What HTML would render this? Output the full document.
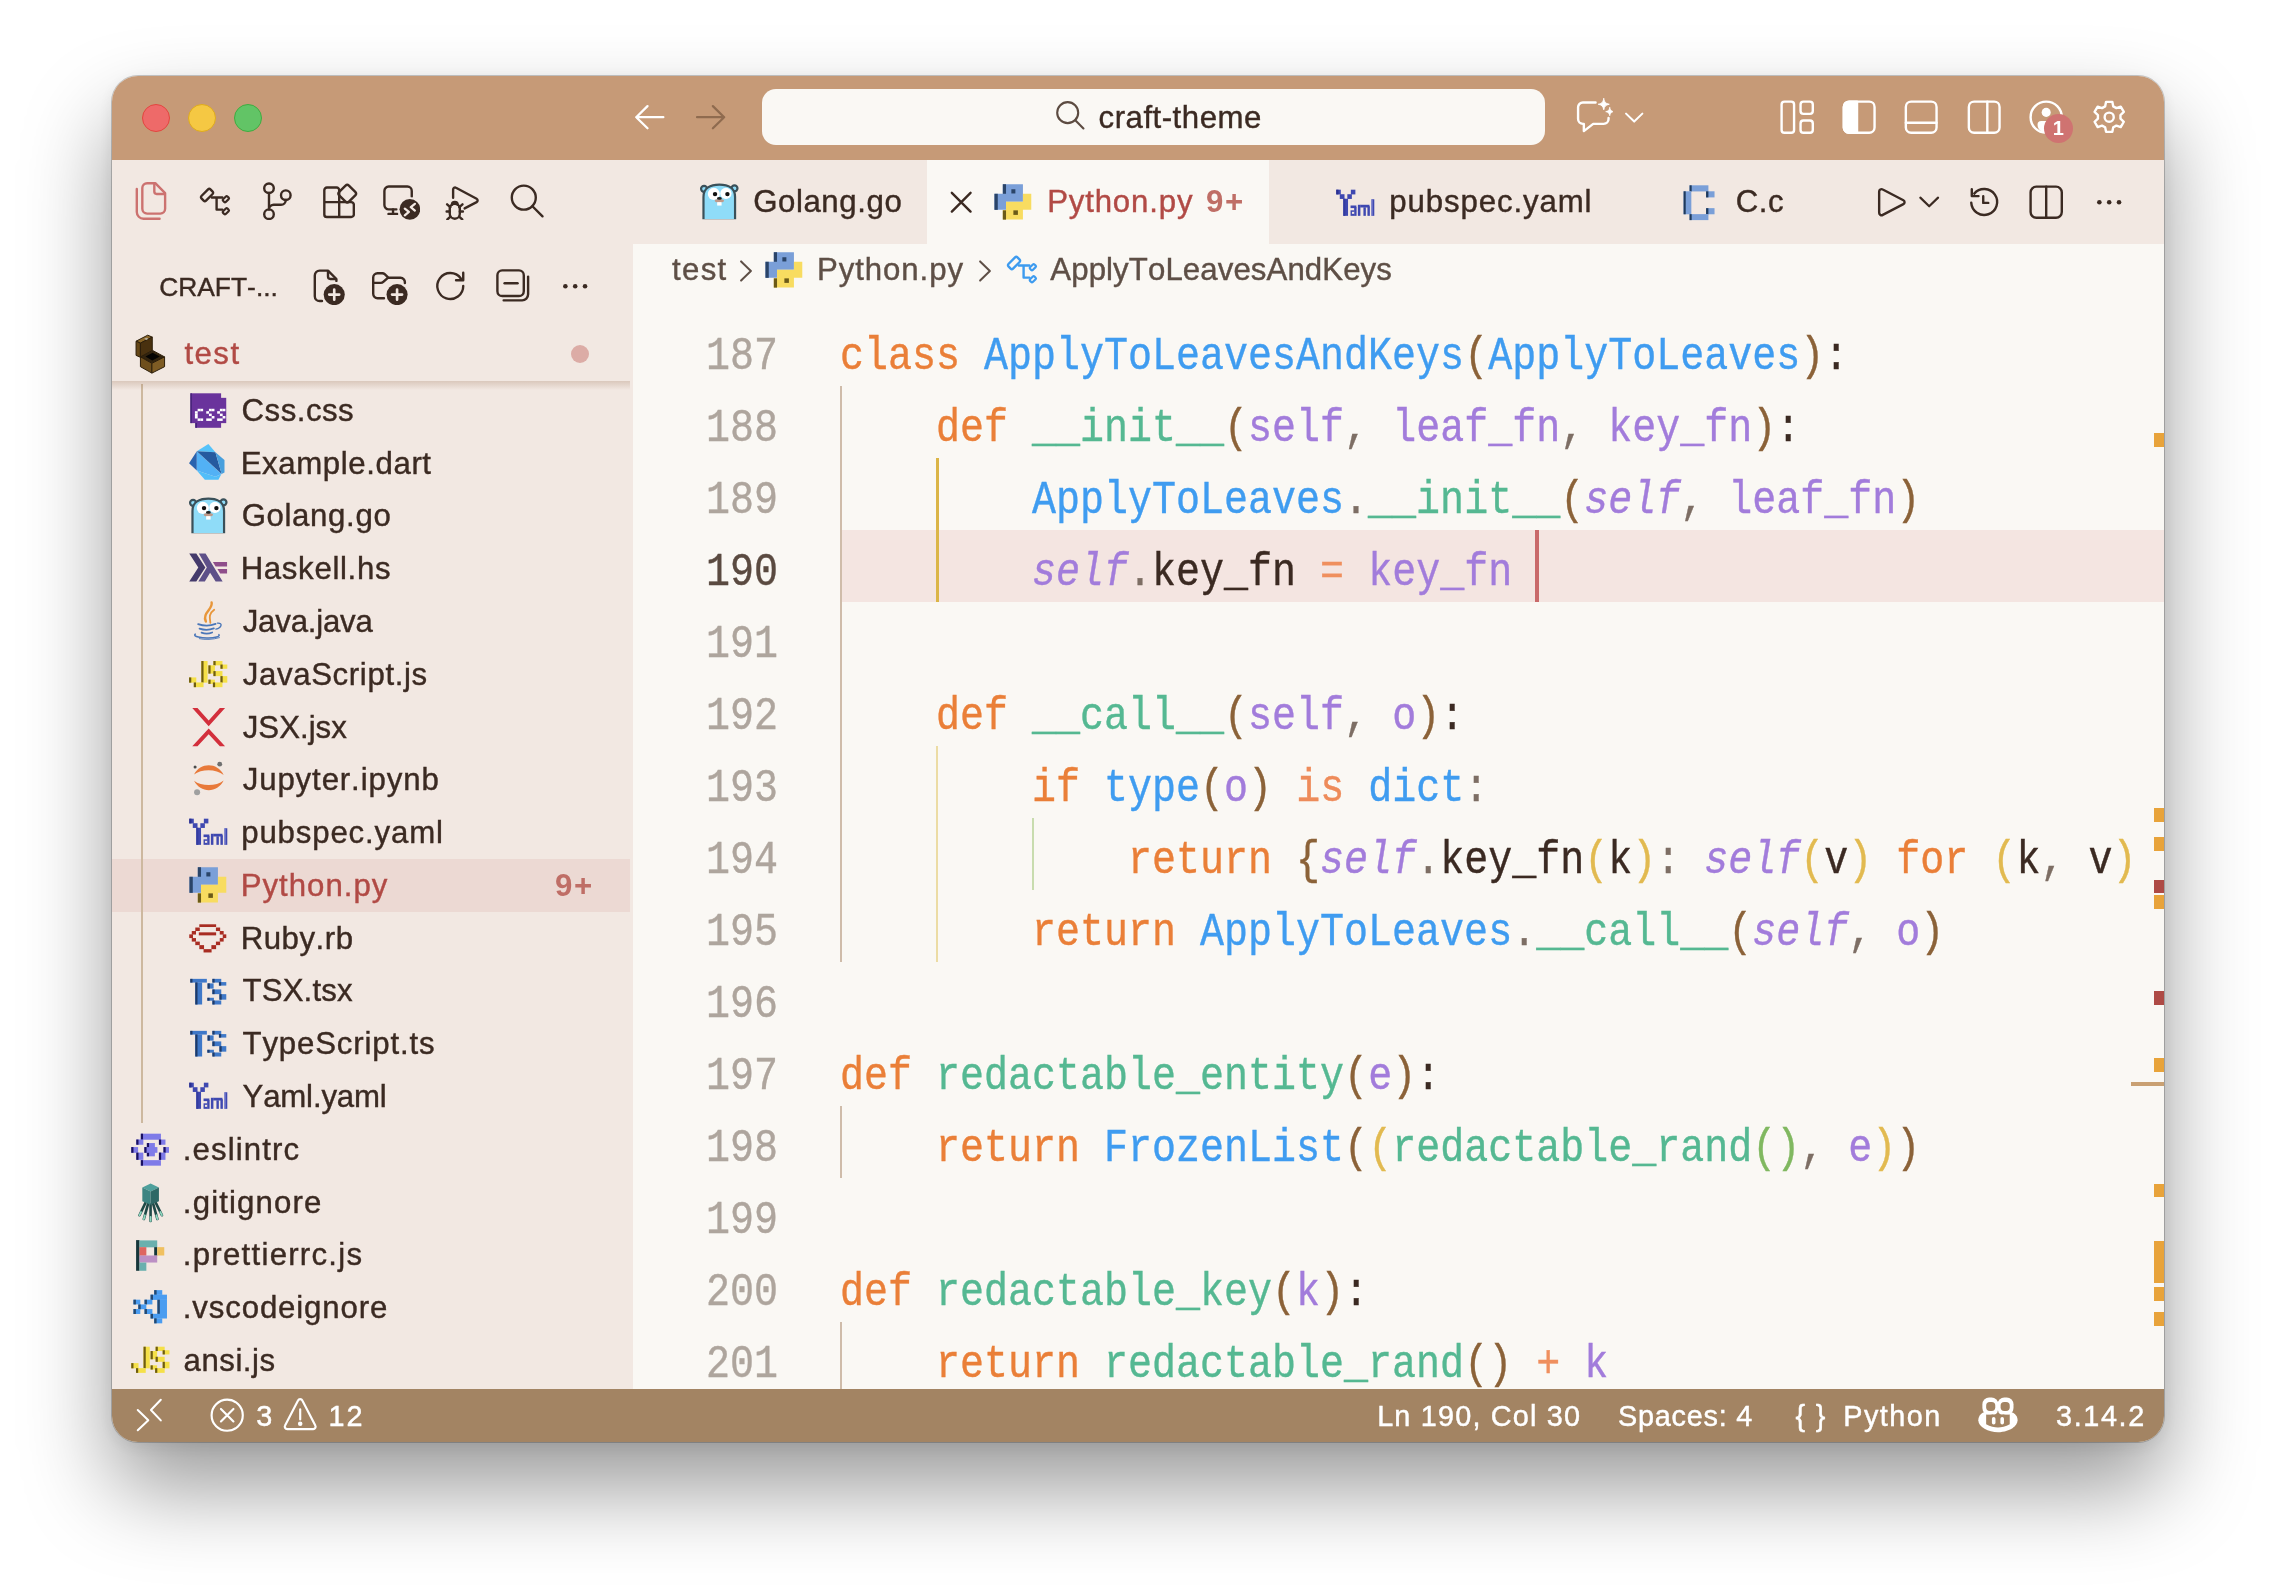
<!DOCTYPE html>
<html lang="en"><head><meta charset="utf-8"><title>craft-theme</title>
<style>
html,body{margin:0;padding:0}
body{width:2276px;height:1590px;background:#fff;overflow:hidden;position:relative;font-family:"Liberation Sans",sans-serif;-webkit-font-smoothing:antialiased}
#win{will-change:transform;position:absolute;left:112px;top:76px;width:2052px;height:1366px;border-radius:26px;overflow:hidden;background:#faf8f4;
 box-shadow:0 0 0 1px rgba(0,0,0,.20),0 46px 88px 0 rgba(0,0,0,.40),0 4px 18px rgba(0,0,0,.08)}
.abs{position:absolute;white-space:nowrap}
.abs svg{display:block}
#title{position:absolute;left:0;top:0;width:2052px;height:84px;background:#c69a77}
#side{position:absolute;left:0;top:84px;width:521px;height:1229px;background:#f2e8e2}
#ed{position:absolute;left:521px;top:84px;width:1531px;height:1229px;background:#faf8f4}
#tabs{position:absolute;left:521px;top:84px;width:1531px;height:84px;background:#f2e8e2}
#acttab{position:absolute;left:815px;top:84px;width:342px;height:84px;background:#faf8f4}
#status{position:absolute;left:0;top:1313px;width:2052px;height:53px;background:#a38463}
.tl{position:absolute;width:26px;height:26px;border-radius:50%;border:1px solid}
#cmd{position:absolute;left:650px;top:13px;width:783px;height:56px;border-radius:14px;background:#faf8f4}
.t{position:absolute;white-space:nowrap;height:40px;line-height:40px;color:#3b2a22;font-size:31.2px;font-kerning:none;-webkit-text-stroke:.4px currentColor}
.cmdt{color:#3b2a22}
.shead{font-size:26.4px}
.red{color:#b14a45}
.red2{color:#bf6e66;font-weight:bold;-webkit-text-stroke:0}
.bc{color:#5e4f46}
.st{color:#fff;font-size:28.8px;-webkit-text-stroke:.45px #fff}
.nbadge{position:absolute;width:29px;height:29px;border-radius:50%;background:#cf7371;color:#fff;font-weight:bold;font-size:20px;line-height:29px;text-align:center}
.selrow{position:absolute;left:0;width:518px;height:53px;background:#ecd9d3}
.tguide{position:absolute;width:2px;background:#cdb89f}
.dot{position:absolute;width:18px;height:18px;border-radius:50%;background:#dcaca6}
#stickysh{position:absolute;left:0;top:305px;width:518px;height:9px;background:linear-gradient(rgba(150,110,80,.26),rgba(150,110,80,0))}
/* code */
.ln,.cl{position:absolute;height:72px;line-height:73.6px;transform:scaleY(1.16);transform-origin:0 0;font-family:"Liberation Mono",monospace;font-size:40px;white-space:pre;-webkit-text-stroke:.35px currentColor}
.ln{left:560px;width:106px;text-align:right;color:#aea59d}
.ln.cur{color:#5a4a40}
.cl{left:728px;color:#3b2a22;width:1312px;height:74px;overflow:hidden}
.k{color:#ea7f38}.c{color:#3f9cf0}.f{color:#55b892}.p{color:#a27cdb}.s{color:#a27cdb;font-style:italic}
.d{color:#3b2a22}.g{color:#7d6e64}.b1{color:#8b6238}.b2{color:#e2ba50}.b3{color:#80b860}.o{color:#ef8f5e}.i{color:#ee8b5a}
.curline{position:absolute;left:728px;top:454px;width:1324px;height:72px;background:#f4e5e1}
.ig{position:absolute;width:2px}
.g1{background:#cfbcaa}.g2{background:#ecdcA4}.g2a{background:#dbb547;width:3px}.g3{background:#c8dcae}
.cursor{position:absolute;left:1423px;top:454px;width:4px;height:72px;background:#c96a6a}
#ruler{position:absolute;left:2040px;top:168px;width:12px;height:1145px}
.mk{position:absolute;left:1.5px;width:11px}
.mo{background:#e8a33a}.mr{background:#ae4a45}
.rcur{position:absolute;left:2019px;top:1006px;width:33px;height:4px;background:#c9a072}
</style></head>
<body>
<div id="win">
<div id="title"></div><div id="side"></div><div id="ed"></div>
<div class="curline"></div>
<div class="ig g1" style="left:728px;top:310px;height:576px"></div>
<div class="ig g1" style="left:728px;top:1030px;height:72px"></div>
<div class="ig g1" style="left:728px;top:1246px;height:78px"></div>
<div class="ig g2a" style="left:824px;top:382px;height:144px"></div>
<div class="ig g2" style="left:824px;top:670px;height:216px"></div>
<div class="ig g3" style="left:920px;top:742px;height:72px"></div>
<div class="ln" style="top:238px">187</div>
<div class="cl" style="top:238px"><span class="k">class</span> <span class="c">ApplyToLeavesAndKeys</span><span class="b1">(</span><span class="c">ApplyToLeaves</span><span class="b1">)</span><span class="d">:</span></div>
<div class="ln" style="top:310px">188</div>
<div class="cl" style="top:310px">    <span class="k">def</span> <span class="f">__init__</span><span class="b1">(</span><span class="p">self</span><span class="g">,</span> <span class="p">leaf_fn</span><span class="g">,</span> <span class="p">key_fn</span><span class="b1">)</span><span class="d">:</span></div>
<div class="ln" style="top:382px">189</div>
<div class="cl" style="top:382px">        <span class="c">ApplyToLeaves</span><span class="g">.</span><span class="f">__init__</span><span class="b1">(</span><span class="s">self</span><span class="g">,</span> <span class="p">leaf_fn</span><span class="b1">)</span></div>
<div class="ln cur" style="top:454px">190</div>
<div class="cl" style="top:454px">        <span class="s">self</span><span class="g">.</span><span class="d">key_fn</span> <span class="o">=</span> <span class="p">key_fn</span> </div>
<div class="ln" style="top:526px">191</div>
<div class="cl" style="top:526px"></div>
<div class="ln" style="top:598px">192</div>
<div class="cl" style="top:598px">    <span class="k">def</span> <span class="f">__call__</span><span class="b1">(</span><span class="p">self</span><span class="g">,</span> <span class="p">o</span><span class="b1">)</span><span class="d">:</span></div>
<div class="ln" style="top:670px">193</div>
<div class="cl" style="top:670px">        <span class="k">if</span> <span class="c">type</span><span class="b1">(</span><span class="p">o</span><span class="b1">)</span> <span class="i">is</span> <span class="c">dict</span><span class="g">:</span></div>
<div class="ln" style="top:742px">194</div>
<div class="cl" style="top:742px">            <span class="k">return</span> <span class="b1">{</span><span class="s">self</span><span class="g">.</span><span class="d">key_fn</span><span class="b2">(</span><span class="d">k</span><span class="b2">)</span><span class="g">:</span> <span class="s">self</span><span class="b2">(</span><span class="d">v</span><span class="b2">)</span> <span class="k">for</span> <span class="b2">(</span><span class="d">k</span><span class="g">,</span> <span class="d">v</span><span class="b2">)</span></div>
<div class="ln" style="top:814px">195</div>
<div class="cl" style="top:814px">        <span class="k">return</span> <span class="c">ApplyToLeaves</span><span class="g">.</span><span class="f">__call__</span><span class="b1">(</span><span class="s">self</span><span class="g">,</span> <span class="p">o</span><span class="b1">)</span></div>
<div class="ln" style="top:886px">196</div>
<div class="cl" style="top:886px"></div>
<div class="ln" style="top:958px">197</div>
<div class="cl" style="top:958px"><span class="k">def</span> <span class="f">redactable_entity</span><span class="b1">(</span><span class="p">e</span><span class="b1">)</span><span class="d">:</span></div>
<div class="ln" style="top:1030px">198</div>
<div class="cl" style="top:1030px">    <span class="k">return</span> <span class="c">FrozenList</span><span class="b1">(</span><span class="b2">(</span><span class="f">redactable_rand</span><span class="b3">(</span><span class="b3">)</span><span class="g">,</span> <span class="p">e</span><span class="b2">)</span><span class="b1">)</span></div>
<div class="ln" style="top:1102px">199</div>
<div class="cl" style="top:1102px"></div>
<div class="ln" style="top:1174px">200</div>
<div class="cl" style="top:1174px"><span class="k">def</span> <span class="f">redactable_key</span><span class="b1">(</span><span class="p">k</span><span class="b1">)</span><span class="d">:</span></div>
<div class="ln" style="top:1246px">201</div>
<div class="cl" style="top:1246px">    <span class="k">return</span> <span class="f">redactable_rand</span><span class="b1">(</span><span class="b1">)</span> <span class="o">+</span> <span class="p">k</span></div>
<div class="cursor"></div>
<div id="ruler"><div class="mk mo" style="top:189px;height:14px"></div><div class="mk mo" style="top:564px;height:14px"></div><div class="mk mo" style="top:593px;height:14px"></div><div class="mk mr" style="top:636px;height:13px"></div><div class="mk mo" style="top:651px;height:14px"></div><div class="mk mr" style="top:747px;height:14px"></div><div class="mk mo" style="top:814px;height:14px"></div><div class="mk mo" style="top:940px;height:13px"></div><div class="mk mo" style="top:997px;height:42px"></div><div class="mk mo" style="top:1043px;height:14px"></div><div class="mk mo" style="top:1068px;height:14px"></div></div>
<div class="rcur"></div>
<div id="tabs"></div><div id="acttab"></div>
<div class="" style="position:absolute;left:521.0px;top:168.0px;width:1531px;height:53px;background:#faf8f4"></div>
<div class="abs " style="left:587.0px;top:107.2px"><svg width="38.4" height="38.4" viewBox="0 0 38.4 38.4" style="overflow:visible"><circle cx="5.08" cy="5.87" r="3.02" fill="#8fdcf8" stroke="#3b5059" stroke-width="2.21"/><circle cx="35.47" cy="5.36" r="3.02" fill="#8fdcf8" stroke="#3b5059" stroke-width="2.21"/><path d="M4.48 37.06L4.48 13.92C4.48 4.86 11.32 1.64 20.38 1.64C29.43 1.64 36.07 4.86 36.07 13.92L36.07 37.06Z" fill="#8fdcf8" stroke="#3b5059" stroke-width="2.21" stroke-linecap="round" stroke-linejoin="round" /><rect x="2.26" y="36.26" width="36.23" height="2.82" fill="#f2e8e2"/><circle cx="14.84" cy="10.9" r="6.04" fill="#ffffff" /><circle cx="26.92" cy="10.39" r="5.64" fill="#ffffff" /><circle cx="16.05" cy="11.1" r="2.21" fill="#111111" /><circle cx="28.43" cy="11.1" r="2.21" fill="#111111" /><ellipse cx="20.38" cy="17.74" rx="4.63" ry="1.81" fill="#c09a8a" /><ellipse cx="20.38" cy="15.42" rx="2.42" ry="1.41" fill="#222222" /><rect x="18.16" y="19.15" width="4.43" height="3.42" fill="#ffffff"/></svg></div>
<div class="t " style="left:641.13px;top:106.3px;letter-spacing:0.587px">Golang.go</div>
<div class="abs " style="left:829.8px;top:106.5px"><svg width="38.4" height="38.4" viewBox="0 0 16 16" fill="none" stroke="#3b2a22" stroke-width="1" stroke-linecap="round" stroke-linejoin="round" ><path d="M4.100 4.100l7.800 7.800M11.900 4.100l-7.800 7.800"/></svg></div>
<div class="abs " style="left:880.6px;top:107.1px"><svg width="38.4" height="38.4" viewBox="0 0 38.4 38.4" style="overflow:visible"><polygon points="9.81,1.21 29.94,1.21 29.94,18.82 13.03,18.82 13.03,26.87 1.46,26.87 1.46,10.77 9.81,10.77" fill="#7a9fd8" /><polygon points="29.94,10.77 38.29,10.77 38.29,26.87 29.94,26.87 29.94,36.63 9.81,36.63 9.81,27.07 13.03,27.07 13.03,18.82 29.94,18.82" fill="#f8dc60" /><rect x="9.81" y="1.21" width="3.22" height="9.56" fill="#2a4468"/><rect x="1.46" y="10.77" width="3.32" height="16.1" fill="#2a4468"/><rect x="18.36" y="6.24" width="4.03" height="4.23" fill="#2a4468"/><rect x="9.81" y="27.37" width="3.22" height="9.26" fill="#6b5a18"/><rect x="20.38" y="27.37" width="4.53" height="4.53" fill="#6b5a18"/></svg></div>
<div class="t red" style="left:935.14px;top:106.3px;letter-spacing:0.833px">Python.py</div>
<div class="t red2" style="left:1094.12px;top:106.3px;letter-spacing:1.474px">9+</div>
<div class="abs " style="left:1222.7px;top:107.6px"><svg width="38.4" height="38.4" viewBox="0 0 38.4 38.4" style="overflow:visible"><rect x="1.26" y="5.69" width="4.53" height="4.73" fill="#3f48b0"/><rect x="4.78" y="10.22" width="4.73" height="4.73" fill="#3f48b0"/><rect x="15.85" y="5.69" width="4.53" height="4.73" fill="#3f48b0"/><rect x="12.33" y="10.22" width="4.53" height="4.73" fill="#3f48b0"/><rect x="8.3" y="14.74" width="4.73" height="17.11" fill="#3f48b0"/><rect x="1.26" y="5.69" width="2.21" height="4.73" fill="#2a3090"/><rect x="8.3" y="14.74" width="2.01" height="17.11" fill="#343ca0"/><rect x="15.55" y="21.49" width="5.84" height="2.62" fill="#3f48b0"/><rect x="19.17" y="23.3" width="2.42" height="8.55" fill="#3f48b0"/><rect x="15.55" y="26.32" width="3.82" height="5.53" fill="#3f48b0"/><rect x="16.95" y="27.83" width="2.21" height="2.01" fill="#f2e8e2"/><rect x="22.89" y="20.78" width="2.52" height="11.07" fill="#3f48b0"/><rect x="25.21" y="20.78" width="9.26" height="2.72" fill="#3f48b0"/><rect x="28.43" y="23.3" width="2.42" height="8.55" fill="#3f48b0"/><rect x="32.45" y="22.29" width="2.42" height="9.56" fill="#3f48b0"/><rect x="36.48" y="15.25" width="2.82" height="16.6" fill="#3f48b0"/><rect x="36.48" y="15.25" width="1.21" height="16.6" fill="#7a80d0"/></svg></div>
<div class="t " style="left:1277.29px;top:106.3px;letter-spacing:0.891px">pubspec.yaml</div>
<div class="abs " style="left:1567.6px;top:106.8px"><svg width="38.4" height="38.4" viewBox="0 0 38.4 38.4" style="overflow:visible"><rect x="9.57" y="2.31" width="18.84" height="6.12" fill="#7a9fd8"/><rect x="9.57" y="2.31" width="2.11" height="6.12" fill="#1f3a5c"/><rect x="3.6" y="8.29" width="7.73" height="22.99" fill="#7a9fd8"/><rect x="3.6" y="8.29" width="2.11" height="22.99" fill="#1f3a5c"/><rect x="26.09" y="8.29" width="8.44" height="6.12" fill="#7a9fd8"/><rect x="26.09" y="8.29" width="2.32" height="6.12" fill="#1f3a5c"/><rect x="26.09" y="25.16" width="8.44" height="6.12" fill="#7a9fd8"/><rect x="26.09" y="25.16" width="2.32" height="6.12" fill="#1f3a5c"/><rect x="9.57" y="31.14" width="18.84" height="5.98" fill="#7a9fd8"/><rect x="9.57" y="31.14" width="2.11" height="5.98" fill="#1f3a5c"/></svg></div>
<div class="t " style="left:1623.72px;top:106.3px;letter-spacing:0.504px">C.c</div>
<div class="abs " style="left:1759.0px;top:106.6px"><svg width="38.4" height="38.4" viewBox="0 0 16 16" fill="none" stroke="#3b2a22" stroke-width="1" stroke-linecap="round" stroke-linejoin="round" ><path d="M3.400 3.600a1 1 0 0 1 1.500-.9l8.600 4.500a.9.9 0 0 1 0 1.600l-8.600 4.500a1 1 0 0 1-1.500-.9z"/></svg></div>
<div class="abs " style="left:1797.8px;top:106.6px"><svg width="38.4" height="38.4" viewBox="0 0 16 16" fill="none" stroke="#3b2a22" stroke-width="0.9" stroke-linecap="round" stroke-linejoin="round" ><path d="M4.300 6.100 8 9.700l3.700-3.600"/></svg></div>
<div class="abs " style="left:1853.0px;top:106.6px"><svg width="38.4" height="38.4" viewBox="0 0 16 16" fill="none" stroke="#3b2a22" stroke-width="1" stroke-linecap="round" stroke-linejoin="round" ><path d="M3.860 4.430A5.400 5.400 0 1 1 2.600 8.200"/><path d="M2.830 2.600v2.860h2.800"/><path d="M7.600 5.500v2.800h2.100"/></svg></div>
<div class="abs " style="left:1915.1px;top:106.6px"><svg width="38.4" height="38.4" viewBox="0 0 16 16" fill="none" stroke="#3b2a22" stroke-width="1" stroke-linecap="round" stroke-linejoin="round" ><rect x="1.500" y="1.500" width="13" height="13" rx="2.400"/><path d="M8 1.500v13"/></svg></div>
<div class="abs " style="left:1977.5px;top:106.6px"><svg width="38.4" height="38.4" viewBox="0 0 16 16" fill="#3b2a22" stroke="none" stroke-width="1" stroke-linecap="round" stroke-linejoin="round" ><circle cx="3.9" cy="8" r=".95"/><circle cx="8" cy="8" r=".95"/><circle cx="12.1" cy="8" r=".95"/></svg></div>
<div class="t bc" style="left:560.03px;top:173.8px;letter-spacing:1.304px">test</div>
<div class="abs " style="left:616.5px;top:177.5px"><svg width="34" height="34" viewBox="0 0 16 16" fill="none" stroke="#5e4f46" stroke-width="0.95" stroke-linecap="round" stroke-linejoin="round" ><path d="M5.700 3.500 10.300 8l-4.600 4.500"/></svg></div>
<div class="abs " style="left:651.8px;top:174.9px"><svg width="38.4" height="38.4" viewBox="0 0 38.4 38.4" style="overflow:visible"><polygon points="9.81,1.21 29.94,1.21 29.94,18.82 13.03,18.82 13.03,26.87 1.46,26.87 1.46,10.77 9.81,10.77" fill="#7a9fd8" /><polygon points="29.94,10.77 38.29,10.77 38.29,26.87 29.94,26.87 29.94,36.63 9.81,36.63 9.81,27.07 13.03,27.07 13.03,18.82 29.94,18.82" fill="#f8dc60" /><rect x="9.81" y="1.21" width="3.22" height="9.56" fill="#2a4468"/><rect x="1.46" y="10.77" width="3.32" height="16.1" fill="#2a4468"/><rect x="18.36" y="6.24" width="4.03" height="4.23" fill="#2a4468"/><rect x="9.81" y="27.37" width="3.22" height="9.26" fill="#6b5a18"/><rect x="20.38" y="27.37" width="4.53" height="4.53" fill="#6b5a18"/></svg></div>
<div class="t bc" style="left:704.94px;top:173.8px;letter-spacing:0.921px">Python.py</div>
<div class="abs " style="left:855.9px;top:177.5px"><svg width="34" height="34" viewBox="0 0 16 16" fill="none" stroke="#5e4f46" stroke-width="0.95" stroke-linecap="round" stroke-linejoin="round" ><path d="M5.700 3.500 10.300 8l-4.600 4.500"/></svg></div>
<div class="abs " style="left:890.0px;top:174.4px"><svg width="38.4" height="38.4" viewBox="0 0 16 16" fill="none" stroke="#3d9bef" stroke-width="1" stroke-linecap="round" stroke-linejoin="round" ><rect x="-2.650" y="-1.350" width="5.300" height="2.700" rx=".7" transform="translate(5.020 5.420) rotate(-45)"/><rect x="-1.300" y="-.8" width="2.600" height="1.600" rx=".45" stroke-width=".9" transform="translate(12.850 7.170) rotate(-45)"/><rect x="-1.300" y="-.8" width="2.600" height="1.600" rx=".45" stroke-width=".9" transform="translate(12.850 12.200) rotate(-45)"/><path d="M7 6.470H11.400M9 6.470V11.500H11.400"/></svg></div>
<div class="t bc" style="left:938.34px;top:173.8px;letter-spacing:0.092px">ApplyToLeavesAndKeys</div>
<div class="selrow" style="position:absolute;left:0.0px;top:783.0px;width:518px;height:53px;"></div>
<div class="tguide" style="position:absolute;left:29.1px;top:308.0px;width:2px;height:739px;"></div>
<div class="abs " style="left:75.8px;top:315.0px"><svg width="38.4" height="38.4" viewBox="0 0 38.4 38.4" style="overflow:visible"><rect x="2.39" y="2.31" width="30.72" height="4.91" fill="#6a339c"/><rect x="2.39" y="6.84" width="35.85" height="25.28" fill="#6a339c"/><rect x="7.29" y="31.97" width="25.81" height="4.83" fill="#6a339c"/><rect x="2.39" y="2.31" width="1.51" height="29.81" fill="#47247a"/><rect x="7.29" y="31.97" width="1.74" height="4.83" fill="#47247a"/><rect x="9.63" y="17.78" width="2.79" height="2.49" fill="#ffffff"/><rect x="12.35" y="17.78" width="2.79" height="2.49" fill="#ffffff"/><rect x="6.92" y="20.2" width="2.79" height="2.49" fill="#ffffff"/><rect x="6.92" y="22.61" width="2.79" height="2.49" fill="#ffffff"/><rect x="6.92" y="25.03" width="2.79" height="2.49" fill="#ffffff"/><rect x="9.63" y="27.44" width="2.79" height="2.49" fill="#ffffff"/><rect x="12.35" y="27.44" width="2.79" height="2.49" fill="#ffffff"/><rect x="20.95" y="17.78" width="2.79" height="2.49" fill="#ffffff"/><rect x="23.67" y="17.78" width="2.79" height="2.49" fill="#ffffff"/><rect x="18.24" y="20.2" width="2.79" height="2.49" fill="#ffffff"/><rect x="20.95" y="22.61" width="2.79" height="2.49" fill="#ffffff"/><rect x="23.67" y="25.03" width="2.79" height="2.49" fill="#ffffff"/><rect x="18.24" y="27.44" width="2.79" height="2.49" fill="#ffffff"/><rect x="20.95" y="27.44" width="2.79" height="2.49" fill="#ffffff"/><rect x="31.9" y="17.78" width="2.79" height="2.49" fill="#ffffff"/><rect x="34.62" y="17.78" width="2.79" height="2.49" fill="#ffffff"/><rect x="29.18" y="20.2" width="2.79" height="2.49" fill="#ffffff"/><rect x="31.9" y="22.61" width="2.79" height="2.49" fill="#ffffff"/><rect x="34.62" y="25.03" width="2.79" height="2.49" fill="#ffffff"/><rect x="29.18" y="27.44" width="2.79" height="2.49" fill="#ffffff"/><rect x="31.9" y="27.44" width="2.79" height="2.49" fill="#ffffff"/></svg></div>
<div class="t " style="left:129.62px;top:314.8px;letter-spacing:0.485px">Css.css</div>
<div class="abs " style="left:75.8px;top:367.8px"><svg width="38.4" height="38.4" viewBox="0 0 38.4 38.4" style="overflow:visible"><polygon points="8.8,7.32 20.38,0.08 27.42,8.33" fill="#56c2f9" /><polygon points="1.06,19.2 8.8,7.32 8.8,26.44" fill="#2a63ae" /><polygon points="8.8,7.32 33.46,29.97 27.42,32.68 8.8,26.44" fill="#52b1f5" /><polygon points="8.8,7.32 27.42,8.33 33.66,29.97" fill="#255a9f" /><polygon points="8.8,26.44 27.42,32.68 33.46,29.97 30.44,35.7 16.85,35.7" fill="#52bef9" /><polygon points="27.42,8.33 36.48,15.88 36.48,28.46 33.66,29.97" fill="#489fdd" /></svg></div>
<div class="t " style="left:128.64px;top:367.6px;letter-spacing:0.606px">Example.dart</div>
<div class="abs " style="left:75.8px;top:420.6px"><svg width="38.4" height="38.4" viewBox="0 0 38.4 38.4" style="overflow:visible"><circle cx="5.08" cy="5.87" r="3.02" fill="#8fdcf8" stroke="#3b5059" stroke-width="2.21"/><circle cx="35.47" cy="5.36" r="3.02" fill="#8fdcf8" stroke="#3b5059" stroke-width="2.21"/><path d="M4.48 37.06L4.48 13.92C4.48 4.86 11.32 1.64 20.38 1.64C29.43 1.64 36.07 4.86 36.07 13.92L36.07 37.06Z" fill="#8fdcf8" stroke="#3b5059" stroke-width="2.21" stroke-linecap="round" stroke-linejoin="round" /><rect x="2.26" y="36.26" width="36.23" height="2.82" fill="#f2e8e2"/><circle cx="14.84" cy="10.9" r="6.04" fill="#ffffff" /><circle cx="26.92" cy="10.39" r="5.64" fill="#ffffff" /><circle cx="16.05" cy="11.1" r="2.21" fill="#111111" /><circle cx="28.43" cy="11.1" r="2.21" fill="#111111" /><ellipse cx="20.38" cy="17.74" rx="4.63" ry="1.81" fill="#c09a8a" /><ellipse cx="20.38" cy="15.42" rx="2.42" ry="1.41" fill="#222222" /><rect x="18.16" y="19.15" width="4.43" height="3.42" fill="#ffffff"/></svg></div>
<div class="t " style="left:129.63px;top:420.4px;letter-spacing:0.650px">Golang.go</div>
<div class="abs " style="left:75.8px;top:473.3px"><svg width="38.4" height="38.4" viewBox="0 0 38.4 38.4" style="overflow:visible"><polygon points="1.26,4.41 8.3,4.41 17.36,18.49 8.3,32.58 1.26,32.58 10.31,18.49" fill="#453a6b" /><polygon points="10.82,4.41 17.56,4.41 34.67,32.58 27.62,32.58 22.09,23.73 16.85,32.58 10.31,32.58 18.87,18.49" fill="#5e5088" /><polygon points="24.9,12.96 39.09,12.96 39.09,17.49 27.62,17.49" fill="#8f4e8b" /><polygon points="29.43,20.0 39.09,20.0 39.09,24.53 32.15,24.53" fill="#8f4e8b" /></svg></div>
<div class="t " style="left:128.64px;top:473.1px;letter-spacing:0.674px">Haskell.hs</div>
<div class="abs " style="left:75.8px;top:526.1px"><svg width="38.4" height="38.4" viewBox="0 0 38.4 38.4" style="overflow:visible"><path d="M23.6 0.44C25.41 6.98 13.84 11.01 17.86 19.56" fill="none" stroke="#e8963a" stroke-width="2.42" stroke-linecap="round" stroke-linejoin="round" /><path d="M26.21 7.79C20.88 11.51 21.38 15.03 22.39 20.87" fill="none" stroke="#e8963a" stroke-width="1.81" stroke-linecap="round" stroke-linejoin="round" /><path d="M10.11 22.08C15.34 23.89 22.39 23.89 27.62 21.88" fill="none" stroke="#4a76b8" stroke-width="1.71" stroke-linecap="round" stroke-linejoin="round" /><path d="M11.52 26.61C15.85 28.12 21.38 28.12 25.91 26.41" fill="none" stroke="#4a76b8" stroke-width="1.71" stroke-linecap="round" stroke-linejoin="round" /><path d="M13.53 30.63C16.85 31.84 20.88 31.84 24.2 30.43" fill="none" stroke="#4a76b8" stroke-width="1.71" stroke-linecap="round" stroke-linejoin="round" /><path d="M29.43 21.07C35.47 20.57 33.46 26.1 27.92 27.11" fill="none" stroke="#4a76b8" stroke-width="1.31" stroke-linecap="round" stroke-linejoin="round" /><path d="M7.29 32.14C4.28 34.66 14.34 36.17 20.38 35.97C26.41 35.76 32.45 34.66 30.94 32.64" fill="none" stroke="#4a76b8" stroke-width="1.51" stroke-linecap="round" stroke-linejoin="round" /><path d="M11.32 36.67C17.36 37.98 24.4 37.68 31.45 35.66" fill="none" stroke="#4a76b8" stroke-width="0.91" stroke-linecap="round" stroke-linejoin="round" /></svg></div>
<div class="t " style="left:130.71px;top:525.9px;letter-spacing:-0.203px">Java.java</div>
<div class="abs " style="left:75.8px;top:578.9px"><svg width="38.4" height="38.4" viewBox="0 0 38.4 38.4" style="overflow:visible"><rect x="13.33" y="6.03" width="6.24" height="21.64" fill="#f5e048"/><rect x="13.33" y="6.03" width="2.21" height="21.64" fill="#6e5c12"/><rect x="1.06" y="22.43" width="7.25" height="5.23" fill="#f5e048"/><rect x="1.06" y="22.43" width="2.21" height="5.23" fill="#6e5c12"/><rect x="5.78" y="27.46" width="9.76" height="4.73" fill="#f5e048"/><rect x="5.78" y="27.46" width="2.21" height="4.73" fill="#6e5c12"/><rect x="25.41" y="6.03" width="9.06" height="4.33" fill="#f5e048"/><rect x="25.41" y="6.03" width="2.21" height="4.33" fill="#6e5c12"/><rect x="32.45" y="9.55" width="6.84" height="4.23" fill="#f5e048"/><rect x="32.45" y="9.55" width="2.21" height="4.23" fill="#6e5c12"/><rect x="20.38" y="10.36" width="6.54" height="8.25" fill="#f5e048"/><rect x="20.38" y="10.36" width="2.21" height="8.25" fill="#6e5c12"/><rect x="25.41" y="16.09" width="9.06" height="5.03" fill="#f5e048"/><rect x="25.41" y="16.09" width="2.21" height="5.03" fill="#6e5c12"/><rect x="32.45" y="21.12" width="6.84" height="6.54" fill="#f5e048"/><rect x="32.45" y="21.12" width="2.21" height="6.54" fill="#6e5c12"/><rect x="20.38" y="24.64" width="6.54" height="4.23" fill="#f5e048"/><rect x="20.38" y="24.64" width="2.21" height="4.23" fill="#6e5c12"/><rect x="24.9" y="27.46" width="9.56" height="4.73" fill="#f5e048"/><rect x="24.9" y="27.46" width="2.21" height="4.73" fill="#6e5c12"/></svg></div>
<div class="t " style="left:130.71px;top:578.7px;letter-spacing:0.638px">JavaScript.js</div>
<div class="abs " style="left:75.8px;top:631.7px"><svg width="38.4" height="38.4" viewBox="0 0 38.4 38.4" style="overflow:visible"><polygon points="4.28,0.04 9.51,0.04 20.68,12.62 31.85,0.04 37.08,0.04 20.68,18.36" fill="#d32f3c" /><polygon points="4.28,38.28 20.68,20.47 37.08,38.28 31.85,38.28 20.68,26.2 9.51,38.28" fill="#d32f3c" /></svg></div>
<div class="t " style="left:130.71px;top:631.5px;letter-spacing:0.017px">JSX.jsx</div>
<div class="abs " style="left:75.8px;top:684.4px"><svg width="38.4" height="38.4" viewBox="0 0 38.4 38.4" style="overflow:visible"><path d="M6.09 14.49C12.33 2.12 29.43 2.12 35.67 14.9C28.43 8.66 13.33 8.66 6.09 14.49Z" fill="#e8793a" stroke="none" stroke-width="0.0" stroke-linecap="round" stroke-linejoin="round" /><path d="M6.09 20.73C12.33 33.31 29.43 33.31 35.67 20.53C28.43 26.57 13.33 26.57 6.09 20.73Z" fill="#e8793a" stroke="none" stroke-width="0.0" stroke-linecap="round" stroke-linejoin="round" /><circle cx="9.11" cy="32.3" r="3.02" fill="#a0a0a0" /><circle cx="31.75" cy="4.13" r="2.42" fill="#707070" /><circle cx="7.09" cy="6.95" r="1.51" fill="#4a4a4a" /></svg></div>
<div class="t " style="left:130.71px;top:684.2px;letter-spacing:0.877px">Jupyter.ipynb</div>
<div class="abs " style="left:75.8px;top:737.2px"><svg width="38.4" height="38.4" viewBox="0 0 38.4 38.4" style="overflow:visible"><rect x="1.26" y="5.69" width="4.53" height="4.73" fill="#3f48b0"/><rect x="4.78" y="10.22" width="4.73" height="4.73" fill="#3f48b0"/><rect x="15.85" y="5.69" width="4.53" height="4.73" fill="#3f48b0"/><rect x="12.33" y="10.22" width="4.53" height="4.73" fill="#3f48b0"/><rect x="8.3" y="14.74" width="4.73" height="17.11" fill="#3f48b0"/><rect x="1.26" y="5.69" width="2.21" height="4.73" fill="#2a3090"/><rect x="8.3" y="14.74" width="2.01" height="17.11" fill="#343ca0"/><rect x="15.55" y="21.49" width="5.84" height="2.62" fill="#3f48b0"/><rect x="19.17" y="23.3" width="2.42" height="8.55" fill="#3f48b0"/><rect x="15.55" y="26.32" width="3.82" height="5.53" fill="#3f48b0"/><rect x="16.95" y="27.83" width="2.21" height="2.01" fill="#f2e8e2"/><rect x="22.89" y="20.78" width="2.52" height="11.07" fill="#3f48b0"/><rect x="25.21" y="20.78" width="9.26" height="2.72" fill="#3f48b0"/><rect x="28.43" y="23.3" width="2.42" height="8.55" fill="#3f48b0"/><rect x="32.45" y="22.29" width="2.42" height="9.56" fill="#3f48b0"/><rect x="36.48" y="15.25" width="2.82" height="16.6" fill="#3f48b0"/><rect x="36.48" y="15.25" width="1.21" height="16.6" fill="#7a80d0"/></svg></div>
<div class="t " style="left:129.19px;top:737.0px;letter-spacing:0.845px">pubspec.yaml</div>
<div class="abs " style="left:75.8px;top:790.0px"><svg width="38.4" height="38.4" viewBox="0 0 38.4 38.4" style="overflow:visible"><polygon points="9.81,1.21 29.94,1.21 29.94,18.82 13.03,18.82 13.03,26.87 1.46,26.87 1.46,10.77 9.81,10.77" fill="#7a9fd8" /><polygon points="29.94,10.77 38.29,10.77 38.29,26.87 29.94,26.87 29.94,36.63 9.81,36.63 9.81,27.07 13.03,27.07 13.03,18.82 29.94,18.82" fill="#f8dc60" /><rect x="9.81" y="1.21" width="3.22" height="9.56" fill="#2a4468"/><rect x="1.46" y="10.77" width="3.32" height="16.1" fill="#2a4468"/><rect x="18.36" y="6.24" width="4.03" height="4.23" fill="#2a4468"/><rect x="9.81" y="27.37" width="3.22" height="9.26" fill="#6b5a18"/><rect x="20.38" y="27.37" width="4.53" height="4.53" fill="#6b5a18"/></svg></div>
<div class="t red" style="left:128.64px;top:789.8px;letter-spacing:1.008px">Python.py</div>
<div class="t red2" style="left:443.02px;top:789.8px;letter-spacing:1.574px">9+</div>
<div class="abs " style="left:75.8px;top:842.8px"><svg width="38.4" height="38.4" viewBox="0 0 38.4 38.4" style="overflow:visible"><rect x="11.32" y="5.3" width="16.81" height="2.72" fill="#a82c22"/><rect x="7.29" y="8.52" width="4.53" height="3.52" fill="#a82c22"/><rect x="3.77" y="12.04" width="4.23" height="3.52" fill="#a82c22"/><rect x="1.26" y="15.36" width="3.72" height="3.72" fill="#a82c22"/><rect x="3.77" y="19.08" width="4.23" height="3.52" fill="#a82c22"/><rect x="7.29" y="22.61" width="4.53" height="3.52" fill="#a82c22"/><rect x="11.32" y="26.13" width="4.73" height="4.03" fill="#a82c22"/><rect x="15.55" y="30.15" width="8.05" height="3.32" fill="#a82c22"/><rect x="27.92" y="8.52" width="4.23" height="3.52" fill="#a82c22"/><rect x="31.75" y="12.04" width="3.92" height="3.52" fill="#a82c22"/><rect x="34.77" y="15.36" width="3.52" height="3.72" fill="#a82c22"/><rect x="31.75" y="19.08" width="3.92" height="3.52" fill="#a82c22"/><rect x="27.92" y="22.61" width="4.23" height="3.52" fill="#a82c22"/><rect x="23.39" y="26.13" width="4.73" height="4.03" fill="#a82c22"/><rect x="10.82" y="13.35" width="17.31" height="3.02" fill="#a82c22"/></svg></div>
<div class="t " style="left:128.64px;top:842.6px;letter-spacing:0.537px">Ruby.rb</div>
<div class="abs " style="left:75.8px;top:895.6px"><svg width="38.4" height="38.4" viewBox="0 0 38.4 38.4" style="overflow:visible"><rect x="2.26" y="6.86" width="16.6" height="3.72" fill="#3f78c8"/><rect x="2.26" y="6.86" width="2.21" height="3.72" fill="#1e3a68"/><rect x="7.29" y="10.38" width="6.84" height="22.14" fill="#3f78c8"/><rect x="7.29" y="10.38" width="2.21" height="22.14" fill="#1e3a68"/><rect x="24.4" y="6.86" width="8.86" height="3.72" fill="#3f78c8"/><rect x="24.4" y="6.86" width="2.21" height="3.72" fill="#1e3a68"/><rect x="30.94" y="10.08" width="7.35" height="3.52" fill="#3f78c8"/><rect x="30.94" y="10.08" width="2.21" height="3.52" fill="#1e3a68"/><rect x="19.57" y="11.39" width="6.04" height="5.23" fill="#3f78c8"/><rect x="19.57" y="11.39" width="2.21" height="5.23" fill="#1e3a68"/><rect x="24.4" y="17.42" width="8.86" height="4.73" fill="#3f78c8"/><rect x="24.4" y="17.42" width="2.21" height="4.73" fill="#1e3a68"/><rect x="31.45" y="22.15" width="6.84" height="5.53" fill="#3f78c8"/><rect x="31.45" y="22.15" width="2.21" height="5.53" fill="#1e3a68"/><rect x="19.37" y="25.78" width="6.54" height="2.92" fill="#3f78c8"/><rect x="19.37" y="25.78" width="2.21" height="2.92" fill="#1e3a68"/><rect x="24.4" y="28.49" width="8.86" height="4.03" fill="#3f78c8"/><rect x="24.4" y="28.49" width="2.21" height="4.03" fill="#1e3a68"/></svg></div>
<div class="t " style="left:130.50px;top:895.4px;letter-spacing:0.153px">TSX.tsx</div>
<div class="abs " style="left:75.8px;top:948.3px"><svg width="38.4" height="38.4" viewBox="0 0 38.4 38.4" style="overflow:visible"><rect x="2.26" y="6.86" width="16.6" height="3.72" fill="#3f78c8"/><rect x="2.26" y="6.86" width="2.21" height="3.72" fill="#1e3a68"/><rect x="7.29" y="10.38" width="6.84" height="22.14" fill="#3f78c8"/><rect x="7.29" y="10.38" width="2.21" height="22.14" fill="#1e3a68"/><rect x="24.4" y="6.86" width="8.86" height="3.72" fill="#3f78c8"/><rect x="24.4" y="6.86" width="2.21" height="3.72" fill="#1e3a68"/><rect x="30.94" y="10.08" width="7.35" height="3.52" fill="#3f78c8"/><rect x="30.94" y="10.08" width="2.21" height="3.52" fill="#1e3a68"/><rect x="19.57" y="11.39" width="6.04" height="5.23" fill="#3f78c8"/><rect x="19.57" y="11.39" width="2.21" height="5.23" fill="#1e3a68"/><rect x="24.4" y="17.42" width="8.86" height="4.73" fill="#3f78c8"/><rect x="24.4" y="17.42" width="2.21" height="4.73" fill="#1e3a68"/><rect x="31.45" y="22.15" width="6.84" height="5.53" fill="#3f78c8"/><rect x="31.45" y="22.15" width="2.21" height="5.53" fill="#1e3a68"/><rect x="19.37" y="25.78" width="6.54" height="2.92" fill="#3f78c8"/><rect x="19.37" y="25.78" width="2.21" height="2.92" fill="#1e3a68"/><rect x="24.4" y="28.49" width="8.86" height="4.03" fill="#3f78c8"/><rect x="24.4" y="28.49" width="2.21" height="4.03" fill="#1e3a68"/></svg></div>
<div class="t " style="left:130.50px;top:948.1px;letter-spacing:0.840px">TypeScript.ts</div>
<div class="abs " style="left:75.8px;top:1001.1px"><svg width="38.4" height="38.4" viewBox="0 0 38.4 38.4" style="overflow:visible"><rect x="1.26" y="5.69" width="4.53" height="4.73" fill="#3f48b0"/><rect x="4.78" y="10.22" width="4.73" height="4.73" fill="#3f48b0"/><rect x="15.85" y="5.69" width="4.53" height="4.73" fill="#3f48b0"/><rect x="12.33" y="10.22" width="4.53" height="4.73" fill="#3f48b0"/><rect x="8.3" y="14.74" width="4.73" height="17.11" fill="#3f48b0"/><rect x="1.26" y="5.69" width="2.21" height="4.73" fill="#2a3090"/><rect x="8.3" y="14.74" width="2.01" height="17.11" fill="#343ca0"/><rect x="15.55" y="21.49" width="5.84" height="2.62" fill="#3f48b0"/><rect x="19.17" y="23.3" width="2.42" height="8.55" fill="#3f48b0"/><rect x="15.55" y="26.32" width="3.82" height="5.53" fill="#3f48b0"/><rect x="16.95" y="27.83" width="2.21" height="2.01" fill="#f2e8e2"/><rect x="22.89" y="20.78" width="2.52" height="11.07" fill="#3f48b0"/><rect x="25.21" y="20.78" width="9.26" height="2.72" fill="#3f48b0"/><rect x="28.43" y="23.3" width="2.42" height="8.55" fill="#3f48b0"/><rect x="32.45" y="22.29" width="2.42" height="9.56" fill="#3f48b0"/><rect x="36.48" y="15.25" width="2.82" height="16.6" fill="#3f48b0"/><rect x="36.48" y="15.25" width="1.21" height="16.6" fill="#7a80d0"/></svg></div>
<div class="t " style="left:130.51px;top:1000.9px;letter-spacing:-0.169px">Yaml.yaml</div>
<div class="abs " style="left:18.8px;top:1053.9px"><svg width="38.4" height="38.4" viewBox="0 0 38.4 38.4" style="overflow:visible"><rect x="9.82" y="3.69" width="20.13" height="6.04" fill="#7f7be8"/><rect x="9.82" y="3.69" width="2.21" height="6.04" fill="#1a1060"/><rect x="9.82" y="30.15" width="20.13" height="5.53" fill="#7f7be8"/><rect x="9.82" y="30.15" width="2.21" height="5.53" fill="#1a1060"/><rect x="5.29" y="9.52" width="7.04" height="5.23" fill="#7f7be8"/><rect x="5.29" y="9.52" width="2.21" height="5.23" fill="#1a1060"/><rect x="0.26" y="17.07" width="6.84" height="5.74" fill="#7f7be8"/><rect x="0.26" y="17.07" width="2.21" height="5.74" fill="#1a1060"/><rect x="5.29" y="22.61" width="7.04" height="7.25" fill="#7f7be8"/><rect x="5.29" y="22.61" width="2.21" height="7.25" fill="#1a1060"/><rect x="27.93" y="9.52" width="6.54" height="5.23" fill="#7f7be8"/><rect x="27.93" y="9.52" width="2.21" height="5.23" fill="#1a1060"/><rect x="32.46" y="17.07" width="5.53" height="5.74" fill="#7f7be8"/><rect x="32.46" y="17.07" width="2.21" height="5.74" fill="#1a1060"/><rect x="27.93" y="22.61" width="6.54" height="7.25" fill="#7f7be8"/><rect x="27.93" y="22.61" width="2.21" height="7.25" fill="#1a1060"/><rect x="15.85" y="13.05" width="8.05" height="13.28" fill="#7f7be8"/><rect x="15.85" y="13.05" width="2.21" height="13.28" fill="#1a1060"/><rect x="13.34" y="17.07" width="13.08" height="5.74" fill="#7f7be8"/><rect x="13.34" y="17.07" width="2.21" height="5.74" fill="#1a1060"/></svg></div>
<div class="t " style="left:70.85px;top:1053.7px;letter-spacing:1.097px">.eslintrc</div>
<div class="abs " style="left:18.8px;top:1106.7px"><svg width="38.4" height="38.4" viewBox="0 0 38.4 38.4" style="overflow:visible"><path d="M14.55 19.64L8.51 32.22" fill="none" stroke="#1f4a48" stroke-width="2.62" stroke-linecap="round" stroke-linejoin="round" /><path d="M10.02 29.07L8.51 32.22" fill="none" stroke="#8fd8c0" stroke-width="1.81" stroke-linecap="round" stroke-linejoin="round" /><path d="M17.06 20.95L12.84 36.04" fill="none" stroke="#1f4a48" stroke-width="2.62" stroke-linecap="round" stroke-linejoin="round" /><path d="M13.89 32.27L12.84 36.04" fill="none" stroke="#8fd8c0" stroke-width="1.81" stroke-linecap="round" stroke-linejoin="round" /><path d="M19.58 21.65L19.58 37.95" fill="none" stroke="#1f4a48" stroke-width="2.62" stroke-linecap="round" stroke-linejoin="round" /><path d="M19.58 33.88L19.58 37.95" fill="none" stroke="#8fd8c0" stroke-width="1.81" stroke-linecap="round" stroke-linejoin="round" /><path d="M22.19 20.95L26.42 36.04" fill="none" stroke="#1f4a48" stroke-width="2.62" stroke-linecap="round" stroke-linejoin="round" /><path d="M25.36 32.27L26.42 36.04" fill="none" stroke="#8fd8c0" stroke-width="1.81" stroke-linecap="round" stroke-linejoin="round" /><path d="M24.71 19.64L30.95 32.22" fill="none" stroke="#1f4a48" stroke-width="2.62" stroke-linecap="round" stroke-linejoin="round" /><path d="M29.39 29.07L30.95 32.22" fill="none" stroke="#8fd8c0" stroke-width="1.81" stroke-linecap="round" stroke-linejoin="round" /><polygon points="11.33,4.54 19.58,0.52 27.93,4.54 19.58,8.57" fill="#4fa09c" /><polygon points="11.33,4.54 19.58,8.57 19.58,21.85 11.33,18.13" fill="#3c8482" /><polygon points="19.58,8.57 27.93,4.54 27.93,18.13 19.58,21.85" fill="#2e6866" /></svg></div>
<div class="t " style="left:70.85px;top:1106.5px;letter-spacing:1.143px">.gitignore</div>
<div class="abs " style="left:18.8px;top:1159.5px"><svg width="38.4" height="38.4" viewBox="0 0 38.4 38.4" style="overflow:visible"><rect x="5.09" y="4.1" width="3.42" height="30.69" fill="#16363a"/><rect x="8.51" y="4.4" width="17.71" height="6.94" fill="#6ab0ae"/><rect x="8.51" y="11.15" width="6.84" height="8.55" fill="#de6660"/><rect x="23.2" y="11.15" width="3.02" height="8.55" fill="#16363a"/><rect x="26.22" y="11.15" width="7.04" height="8.35" fill="#f0c060"/><rect x="8.51" y="19.5" width="17.71" height="7.04" fill="#bc90c4"/><rect x="8.51" y="26.54" width="6.84" height="8.25" fill="#6ab0ae"/></svg></div>
<div class="t " style="left:70.85px;top:1159.3px;letter-spacing:1.255px">.prettierrc.js</div>
<div class="abs " style="left:18.8px;top:1212.2px"><svg width="38.4" height="38.4" viewBox="0 0 38.4 38.4" style="overflow:visible"><rect x="23.2" y="2.14" width="8.05" height="4.73" fill="#4a9cf0"/><rect x="23.2" y="2.14" width="2.42" height="4.73" fill="#244870"/><rect x="19.58" y="6.67" width="16.4" height="5.23" fill="#4a9cf0"/><rect x="19.58" y="6.67" width="2.42" height="5.23" fill="#244870"/><rect x="26.42" y="11.7" width="9.56" height="14.29" fill="#4a9cf0"/><rect x="26.42" y="11.7" width="2.42" height="14.29" fill="#244870"/><rect x="19.58" y="25.79" width="16.4" height="4.73" fill="#4a9cf0"/><rect x="19.58" y="25.79" width="2.42" height="4.73" fill="#244870"/><rect x="23.2" y="30.32" width="8.05" height="5.03" fill="#4a9cf0"/><rect x="23.2" y="30.32" width="2.42" height="5.03" fill="#244870"/><rect x="2.47" y="11.7" width="6.84" height="4.73" fill="#4a9cf0"/><rect x="2.47" y="11.7" width="2.42" height="4.73" fill="#244870"/><rect x="13.54" y="11.7" width="7.85" height="4.73" fill="#4a9cf0"/><rect x="13.54" y="11.7" width="2.42" height="4.73" fill="#244870"/><rect x="7.3" y="16.43" width="8.05" height="4.83" fill="#4a9cf0"/><rect x="7.3" y="16.43" width="2.42" height="4.83" fill="#244870"/><rect x="2.47" y="21.06" width="6.84" height="4.93" fill="#4a9cf0"/><rect x="2.47" y="21.06" width="2.42" height="4.93" fill="#244870"/><rect x="13.54" y="21.06" width="7.85" height="4.93" fill="#4a9cf0"/><rect x="13.54" y="21.06" width="2.42" height="4.93" fill="#244870"/></svg></div>
<div class="t " style="left:70.85px;top:1212.0px;letter-spacing:0.857px">.vscodeignore</div>
<div class="abs " style="left:18.8px;top:1265.0px"><svg width="38.4" height="38.4" viewBox="0 0 38.4 38.4" style="overflow:visible"><rect x="12.53" y="5.71" width="6.24" height="21.64" fill="#f5e048"/><rect x="12.53" y="5.71" width="2.21" height="21.64" fill="#6e5c12"/><rect x="0.26" y="22.11" width="7.25" height="5.23" fill="#f5e048"/><rect x="0.26" y="22.11" width="2.21" height="5.23" fill="#6e5c12"/><rect x="4.99" y="27.15" width="9.76" height="4.73" fill="#f5e048"/><rect x="4.99" y="27.15" width="2.21" height="4.73" fill="#6e5c12"/><rect x="24.61" y="5.71" width="9.06" height="4.33" fill="#f5e048"/><rect x="24.61" y="5.71" width="2.21" height="4.33" fill="#6e5c12"/><rect x="31.65" y="9.23" width="6.84" height="4.23" fill="#f5e048"/><rect x="31.65" y="9.23" width="2.21" height="4.23" fill="#6e5c12"/><rect x="19.58" y="10.04" width="6.54" height="8.25" fill="#f5e048"/><rect x="19.58" y="10.04" width="2.21" height="8.25" fill="#6e5c12"/><rect x="24.61" y="15.78" width="9.06" height="5.03" fill="#f5e048"/><rect x="24.61" y="15.78" width="2.21" height="5.03" fill="#6e5c12"/><rect x="31.65" y="20.81" width="6.84" height="6.54" fill="#f5e048"/><rect x="31.65" y="20.81" width="2.21" height="6.54" fill="#6e5c12"/><rect x="19.58" y="24.33" width="6.54" height="4.23" fill="#f5e048"/><rect x="19.58" y="24.33" width="2.21" height="4.23" fill="#6e5c12"/><rect x="24.11" y="27.15" width="9.56" height="4.73" fill="#f5e048"/><rect x="24.11" y="27.15" width="2.21" height="4.73" fill="#6e5c12"/></svg></div>
<div class="t " style="left:71.57px;top:1264.8px;letter-spacing:0.520px">ansi.js</div>
<div class="" style="position:absolute;left:0.0px;top:252.0px;width:521px;height:53px;background:#f2e8e2"></div>
<div id="stickysh"></div>
<div class="abs " style="left:18.8px;top:258.8px"><svg width="38.4" height="38.4" viewBox="0 0 38.4 38.4" style="overflow:visible"><polygon points="5.05,6.2 16.75,0.16 21.28,2.12 9.43,8.16" fill="#8a6628" stroke="#2c1e0a" stroke-width="1" stroke-linejoin="round"/><polygon points="5.05,6.2 9.43,8.16 9.43,22.28 5.05,20.39" fill="#654616" stroke="#2c1e0a" stroke-width="1" stroke-linejoin="round"/><polygon points="9.43,8.16 21.28,2.12 21.28,15.48 9.43,22.28" fill="#49310f" stroke="#2c1e0a" stroke-width="1" stroke-linejoin="round"/><polygon points="9.43,21.9 21.65,15.48 33.58,21.9 20.9,28.31" fill="#33240e" stroke="#2c1e0a" stroke-width="1" stroke-linejoin="round"/><polygon points="14.48,21.52 21.65,17.75 28.82,21.52 21.28,25.52" fill="#050402" /><polygon points="9.43,21.9 20.9,28.31 20.9,38.12 9.43,31.71" fill="#6f4f1c" stroke="#2c1e0a" stroke-width="1" stroke-linejoin="round"/><polygon points="20.9,28.31 33.58,21.9 33.58,31.71 20.9,38.12" fill="#7e5c24" stroke="#2c1e0a" stroke-width="1" stroke-linejoin="round"/><polygon points="13.2,3.78 15.24,2.73 17.5,3.78 15.46,4.92" fill="#b8b0a0" /></svg></div>
<div class="t red" style="left:72.43px;top:258.3px;letter-spacing:1.471px">test</div>
<div class="dot" style="position:absolute;left:459.0px;top:269.0px;width:18px;height:18px;"></div>
<div class="" style="position:absolute;left:0.0px;top:84.0px;width:521px;height:168px;background:#f2e8e2"></div>
<div class="abs " style="left:20.3px;top:105.5px"><svg width="38.4" height="38.4" viewBox="0 0 16 16" fill="none" stroke="#cc7270" stroke-width="1" stroke-linecap="round" stroke-linejoin="round" ><path d="M6.3 .5H9.7L13.8 4.6v6.6a2 2 0 0 1-2 2H6.3a2 2 0 0 1-2-2V2.500a2 2 0 0 1 2-2z"/><path d="M9.300 .7V4a1 1 0 0 0 1 1h3.300"/><path d="M2 2.900V12.500a2.800 2.800 0 0 0 2.800 2.800H11.500"/></svg></div>
<div class="abs " style="left:82.7px;top:105.5px"><svg width="38.4" height="38.4" viewBox="0 0 16 16" fill="none" stroke="#3b2a22" stroke-width="1" stroke-linecap="round" stroke-linejoin="round" ><rect x="-2.650" y="-1.350" width="5.300" height="2.700" rx=".7" transform="translate(5.020 5.420) rotate(-45)"/><rect x="-1.300" y="-.8" width="2.600" height="1.600" rx=".45" stroke-width=".9" transform="translate(12.850 7.170) rotate(-45)"/><rect x="-1.300" y="-.8" width="2.600" height="1.600" rx=".45" stroke-width=".9" transform="translate(12.850 12.200) rotate(-45)"/><path d="M7 6.470H11.400M9 6.470V11.500H11.400"/></svg></div>
<div class="abs " style="left:145.1px;top:105.5px"><svg width="38.4" height="38.4" viewBox="0 0 16 16" fill="none" stroke="#3b2a22" stroke-width="1" stroke-linecap="round" stroke-linejoin="round" ><circle cx="5" cy="2.6" r="2"/><circle cx="5" cy="13.4" r="2"/><circle cx="12" cy="5.5" r="2"/><path d="M5 4.6v6.8M12 7.5a2 2 0 0 1-2 2H7a2 2 0 0 0-2 2"/></svg></div>
<div class="abs " style="left:207.5px;top:105.5px"><svg width="38.4" height="38.4" viewBox="0 0 16 16" fill="none" stroke="#3b2a22" stroke-width="1" stroke-linecap="round" stroke-linejoin="round" ><path d="M8 8.400V3.400a1.100 1.100 0 0 0-1.100-1.100H2.900a1.100 1.100 0 0 0-1.100 1.100v10.100a1.100 1.100 0 0 0 1.100 1.100h10.100a1.100 1.100 0 0 0 1.100-1.100V9.500a1.100 1.100 0 0 0-1.100-1.100zM1.800 8.400H8V14.600"/><path d="M10.650 1.500a1 1 0 0 1 1.400 0l2.650 2.650a1 1 0 0 1 0 1.400l-2.650 2.650a1 1 0 0 1-1.400 0L8 5.550a1 1 0 0 1 0-1.400z"/></svg></div>
<div class="abs " style="left:269.9px;top:105.5px"><svg width="38.4" height="38.4" viewBox="0 0 16 16" fill="none" stroke="#3b2a22" stroke-width="1" stroke-linecap="round" stroke-linejoin="round" ><path d="M6 11.4H2.8A1.8 1.8 0 0 1 1 9.6V3.7a1.8 1.8 0 0 1 1.8-1.8h7.8a1.8 1.8 0 0 1 1.8 1.8V6"/><path d="M4.6 11.4v1.9M2.7 13.3H6.3"/><circle cx="11.6" cy="11.4" r="4.95" fill="#f2e8e2" stroke="none"/><circle cx="11.6" cy="11.4" r="4.3" fill="#3b2a22" stroke="none"/><path d="M9.500 11.100l1.700 1.400-1.700 1.400M13.700 9.100l-1.700 1.400 1.700 1.400" stroke="#f2e8e2" stroke-width=".95"/></svg></div>
<div class="abs " style="left:332.3px;top:105.5px"><svg width="38.4" height="38.4" viewBox="0 0 16 16" fill="none" stroke="#3b2a22" stroke-width="1" stroke-linecap="round" stroke-linejoin="round" ><path d="M3.8 6.6V3.1a.8.8 0 0 1 1.2-.7l8.6 4.6a.8.8 0 0 1 0 1.4L8.6 11"/><path d="M2.4 11.2a2.1 2.1 0 0 1 4.2 0v2a2.1 2.1 0 0 1-4.2 0z"/><path d="M3.3 9.5a1.2 1.2 0 0 1 2.4 0M2.4 12.3H1.1M6.6 12.3h1.3M2.6 10.5 1.3 9.3M6.4 10.5l1.3-1.2M2.7 14.4l-1.3 1.2M6.3 14.4l1.3 1.2"/></svg></div>
<div class="abs " style="left:394.7px;top:105.5px"><svg width="38.4" height="38.4" viewBox="0 0 16 16" fill="none" stroke="#3b2a22" stroke-width="1" stroke-linecap="round" stroke-linejoin="round" ><circle cx="7" cy="6.5" r="5"/><path d="M10.6 10.1l4.2 4.2"/></svg></div>
<div class="t shead" style="left:47.16px;top:191.0px;letter-spacing:-0.004px">CRAFT-...</div>
<div class="abs " style="left:198.4px;top:190.8px"><svg width="38.4" height="38.4" viewBox="0 0 16 16" fill="none" stroke="#3b2a22" stroke-width="1" stroke-linecap="round" stroke-linejoin="round" ><path d="M5 14.2H4a2 2 0 0 1-2-2V3.5a2 2 0 0 1 2-2h3.5L11 5v.8"/><path d="M7.5 1.7V4a1 1 0 0 0 1 1h2.3"/><circle cx="10.1" cy="11.5" r="4.4" fill="#3b2a22" stroke="none"/><path d="M8.0 11.5h4.2M10.1 9.4v4.2" stroke="#f2e8e2" stroke-width="1.1"/></svg></div>
<div class="abs " style="left:259.9px;top:190.8px"><svg width="38.4" height="38.4" viewBox="0 0 16 16" fill="none" stroke="#3b2a22" stroke-width="1" stroke-linecap="round" stroke-linejoin="round" ><path d="M5 13H2.3A1.8 1.8 0 0 1 .5 11.2V4.4a1.8 1.8 0 0 1 1.8-1.8h2a1.5 1.5 0 0 1 1 .4l1.6 1.5h5a1.8 1.8 0 0 1 1.8 1.8v.4"/><path d="M.5 6.6h3.2a1.5 1.5 0 0 0 1-.4l1.9-1.7"/><circle cx="10.45" cy="11.5" r="4.4" fill="#3b2a22" stroke="none"/><path d="M8.35 11.5h4.2M10.45 9.4v4.2" stroke="#f2e8e2" stroke-width="1.1"/></svg></div>
<div class="abs " style="left:321.4px;top:190.8px"><svg width="38.4" height="38.4" viewBox="0 0 16 16" fill="none" stroke="#3b2a22" stroke-width="1" stroke-linecap="round" stroke-linejoin="round" ><path d="M12.6 7.9A5.4 5.4 0 1 1 11.6 4.8"/><path d="M12.6 2.4v3.1H9.6"/></svg></div>
<div class="abs " style="left:382.9px;top:190.8px"><svg width="38.4" height="38.4" viewBox="0 0 16 16" fill="none" stroke="#3b2a22" stroke-width="1" stroke-linecap="round" stroke-linejoin="round" ><rect x="1" y="1.4" width="11" height="10.7" rx="2"/><path d="M4 6.8h5.4"/><path d="M13.8 4v7.4a2.5 2.5 0 0 1-2.5 2.5H3.6"/></svg></div>
<div class="abs " style="left:444.4px;top:190.8px"><svg width="38.4" height="38.4" viewBox="0 0 16 16" fill="#3b2a22" stroke="none" stroke-width="1" stroke-linecap="round" stroke-linejoin="round" ><circle cx="3.9" cy="8" r=".95"/><circle cx="8" cy="8" r=".95"/><circle cx="12.1" cy="8" r=".95"/></svg></div>
<div class="tl" style="position:absolute;left:30.0px;top:28.0px;width:26px;height:26px;background:#ee6a69;border-color:#e2463f"></div>
<div class="tl" style="position:absolute;left:76.0px;top:28.0px;width:26px;height:26px;background:#f5c843;border-color:#dfab1c"></div>
<div class="tl" style="position:absolute;left:122.0px;top:28.0px;width:26px;height:26px;background:#62c466;border-color:#3fac41"></div>
<div class="abs " style="left:517.6px;top:21.7px"><svg width="38.4" height="38.4" viewBox="0 0 16 16" fill="none" stroke="#ffffff" stroke-width="0.95" stroke-linecap="round" stroke-linejoin="round" ><path d="M2.6 8h11.3M7.3 3.4 2.6 8l4.7 4.6"/></svg></div>
<div class="abs " style="left:580.3px;top:21.7px"><svg width="38.4" height="38.4" viewBox="0 0 16 16" fill="none" stroke="#8f6b4f" stroke-width="0.95" stroke-linecap="round" stroke-linejoin="round" ><path d="M13.4 8H2.1M8.7 3.4 13.4 8l-4.7 4.6"/></svg></div>
<div id="cmd"></div>
<div class="abs " style="left:940.9px;top:23.2px"><svg width="33.6" height="33.6" viewBox="0 0 16 16" fill="none" stroke="#5c4b41" stroke-width="1.0" stroke-linecap="round" stroke-linejoin="round" ><circle cx="7" cy="6.5" r="5"/><path d="M10.6 10.1l3.9 3.9"/></svg></div>
<div class="t cmdt" style="left:986.57px;top:22.2px;letter-spacing:0.503px">craft-theme</div>
<div class="abs " style="left:1462.4px;top:21.5px"><svg width="38.4" height="38.4" viewBox="0 0 16 16" fill="none" stroke="#ffffff" stroke-width="1" stroke-linecap="round" stroke-linejoin="round" ><path d="M9 1.9H3.7a2 2 0 0 0-2 2v4.9a2 2 0 0 0 2 2h.4v3l3.9-3h4.4a2 2 0 0 0 2-2V8.3"/><path d="M12.4.3c.3 1.5.8 2 2.3 2.3-1.5.3-2 .8-2.3 2.3-.3-1.5-.8-2-2.3-2.3 1.5-.3 2-.8 2.3-2.300z" fill="#fff" stroke-width=".4"/><path d="M14.9 4c.2 1.100.600 1.500 1.700 1.700-1.100.200-1.500.600-1.700 1.700-.2-1.100-.6-1.500-1.700-1.700 1.100-.2 1.500-.6 1.700-1.700z" fill="#fff" stroke-width=".3"/></svg></div>
<div class="abs " style="left:1502.8px;top:22.5px"><svg width="38.4" height="38.4" viewBox="0 0 16 16" fill="none" stroke="#ffffff" stroke-width="0.85" stroke-linecap="round" stroke-linejoin="round" ><path d="M4.600 6.100 8 9.400l3.400-3.300"/></svg></div>
<div class="abs " style="left:1665.6px;top:21.5px"><svg width="38.4" height="38.4" viewBox="0 0 16 16" fill="none" stroke="#ffffff" stroke-width="1" stroke-linecap="round" stroke-linejoin="round" ><rect x="1.500" y="1.500" width="5.200" height="13" rx="1.200"/><rect x="9.400" y="1.500" width="5.100" height="5.100" rx="1.200"/><rect x="9.400" y="9.400" width="5.100" height="5.100" rx="1.200"/></svg></div>
<div class="abs " style="left:1728.0px;top:21.5px"><svg width="38.4" height="38.4" viewBox="0 0 16 16" fill="none" stroke="#ffffff" stroke-width="1" stroke-linecap="round" stroke-linejoin="round" ><rect x="1.600" y="1.500" width="12.800" height="13" rx="2.200"/><path d="M3.800 1.500h3.300v13H3.800a2.200 2.200 0 0 1-2.200-2.200V3.700a2.200 2.200 0 0 1 2.200-2.200z" fill="#fff"/></svg></div>
<div class="abs " style="left:1790.4px;top:21.5px"><svg width="38.4" height="38.4" viewBox="0 0 16 16" fill="none" stroke="#ffffff" stroke-width="1" stroke-linecap="round" stroke-linejoin="round" ><rect x="1.600" y="1.500" width="12.800" height="13" rx="2.200"/><path d="M1.600 10.300h12.800"/></svg></div>
<div class="abs " style="left:1852.8px;top:21.5px"><svg width="38.4" height="38.4" viewBox="0 0 16 16" fill="none" stroke="#ffffff" stroke-width="1" stroke-linecap="round" stroke-linejoin="round" ><rect x="1.600" y="1.500" width="12.800" height="13" rx="2.200"/><path d="M9.300 1.500v13"/></svg></div>
<div class="abs " style="left:1915.0px;top:21.5px"><svg width="38.4" height="38.4" viewBox="0 0 16 16" fill="none" stroke="#ffffff" stroke-width="1" stroke-linecap="round" stroke-linejoin="round" ><circle cx="8" cy="8" r="6.500"/><circle cx="8" cy="6" r="1.900" fill="#fff" stroke="none"/><path d="M4.400 11.100a1.500 1.500 0 0 1 1.500-1.500h4.200a1.500 1.500 0 0 1 1.500 1.500c0 2-1.600 3.300-3.600 3.300s-3.600-1.300-3.600-3.300z" fill="#fff" stroke="none"/></svg></div>
<div class="abs " style="left:1977.8px;top:21.5px"><svg width="38.4" height="38.4" viewBox="0 0 16 16" fill="none" stroke="#ffffff" stroke-width="1" stroke-linecap="round" stroke-linejoin="round" ><circle cx="8" cy="8" r="1.900"/><path d="M6.700 1.600h2.600l.4 1.900 1.300.7 1.800-.6 1.300 2.200-1.400 1.300v1.500l1.400 1.300-1.300 2.200-1.800-.6-1.300.7-.4 1.900H6.700l-.4-1.900-1.300-.7-1.800.6-1.300-2.200 1.400-1.300V7.100L1.900 5.800l1.300-2.200 1.800.6 1.300-.7z"/></svg></div>
<div class="nbadge" style="position:absolute;left:1931.8px;top:38.3px;width:29px;height:29px;">1</div>
<div id="status"></div>
<div class="abs " style="left:19.5px;top:1318.0px"><svg width="38.4" height="38.4" viewBox="0 0 16 16" fill="none" stroke="#ffffff" stroke-width="0.85" stroke-linecap="round" stroke-linejoin="round" ><path d="M2.400 6.700 6.800 10.900 2.400 15.100M12.000 2.400 7.900 6.700l4.100 4.300"/></svg></div>
<div class="abs " style="left:95.9px;top:1319.5px"><svg width="38.4" height="38.4" viewBox="0 0 16 16" fill="none" stroke="#ffffff" stroke-width="0.9" stroke-linecap="round" stroke-linejoin="round" ><circle cx="8" cy="8" r="6.500"/><path d="M5.400 5.400l5.200 5.200M10.600 5.400l-5.200 5.200"/></svg></div>
<div class="t st" style="left:144.30px;top:1320.0px">3</div>
<div class="abs " style="left:168.8px;top:1319.0px"><svg width="38.4" height="38.4" viewBox="0 0 16 16" fill="none" stroke="#ffffff" stroke-width="0.9" stroke-linecap="round" stroke-linejoin="round" ><path d="M7.100 2.300a1 1 0 0 1 1.800 0l5.400 10.400a1 1 0 0 1-.9 1.500H2.600a1 1 0 0 1-.9-1.500z"/><path d="M8 6v4.200"/><circle cx="8" cy="12" r=".5" fill="#fff"/></svg></div>
<div class="t st" style="left:216.61px;top:1320.0px;letter-spacing:1.908px">12</div>
<div class="t st" style="left:1265.14px;top:1320.0px;letter-spacing:1.204px">Ln 190, Col 30</div>
<div class="t st" style="left:1506.09px;top:1320.0px;letter-spacing:0.759px">Spaces: 4</div>
<div class="t st" style="left:1683.52px;top:1320.0px;letter-spacing:1.330px">{ }</div>
<div class="t st" style="left:1731.24px;top:1320.0px;letter-spacing:1.454px">Python</div>
<div class="abs " style="left:1865.5px;top:1319.0px"><svg width="40" height="40" viewBox="0 0 40 40" style="overflow:visible"><path d="M0.29 25.19C0.29 20.16 4.85 16.7 8.63 16.7L31.27 16.7C35.04 16.7 39.6 20.16 39.6 25.19C39.6 32.11 29.38 37.14 19.95 37.14C10.51 37.14 0.29 32.11 0.29 25.19Z" fill="#ffffff" stroke="none" stroke-width="0.0" stroke-linecap="round" stroke-linejoin="round" /><rect x="4.38" y="2.55" width="15.94" height="17.3" rx="6.76" fill="#ffffff"/><rect x="19.57" y="2.55" width="15.94" height="17.3" rx="6.76" fill="#ffffff"/><polygon points="17.75,2.23 19.95,5.22 22.15,2.23" fill="#a38463" /><rect x="8.15" y="7.11" width="9.12" height="8.81" rx="3.62" fill="#a38463"/><rect x="22.62" y="7.11" width="9.12" height="8.81" rx="3.62" fill="#a38463"/><path d="M8.15 19.37L31.74 19.37L31.74 29.28C27.81 31.48 23.09 32.58 19.95 32.58C16.8 32.58 12.08 31.48 8.15 29.28Z" fill="#a38463" stroke="none" stroke-width="0.0" stroke-linecap="round" stroke-linejoin="round" /><path d="M8.15 19.84C13.66 19.84 18.06 18.9 19.95 15.91C21.83 18.9 26.24 19.84 31.74 19.84L31.74 19.21L8.15 19.21Z" fill="#ffffff" stroke="none" stroke-width="0.0" stroke-linecap="round" stroke-linejoin="round" /><path d="M16.17 20.16C18.37 19.21 19.47 17.64 19.95 16.01C20.42 17.64 21.52 19.21 23.72 20.16Z" fill="#a38463" stroke="none" stroke-width="0.0" stroke-linecap="round" stroke-linejoin="round" /><rect x="13.91" y="22.04" width="3.58" height="7.55" rx="1.79" fill="#ffffff"/><rect x="22.4" y="22.04" width="3.58" height="7.55" rx="1.79" fill="#ffffff"/></svg></div>
<div class="t st" style="left:1944.10px;top:1320.0px;letter-spacing:1.615px">3.14.2</div>
</div>
</body></html>
